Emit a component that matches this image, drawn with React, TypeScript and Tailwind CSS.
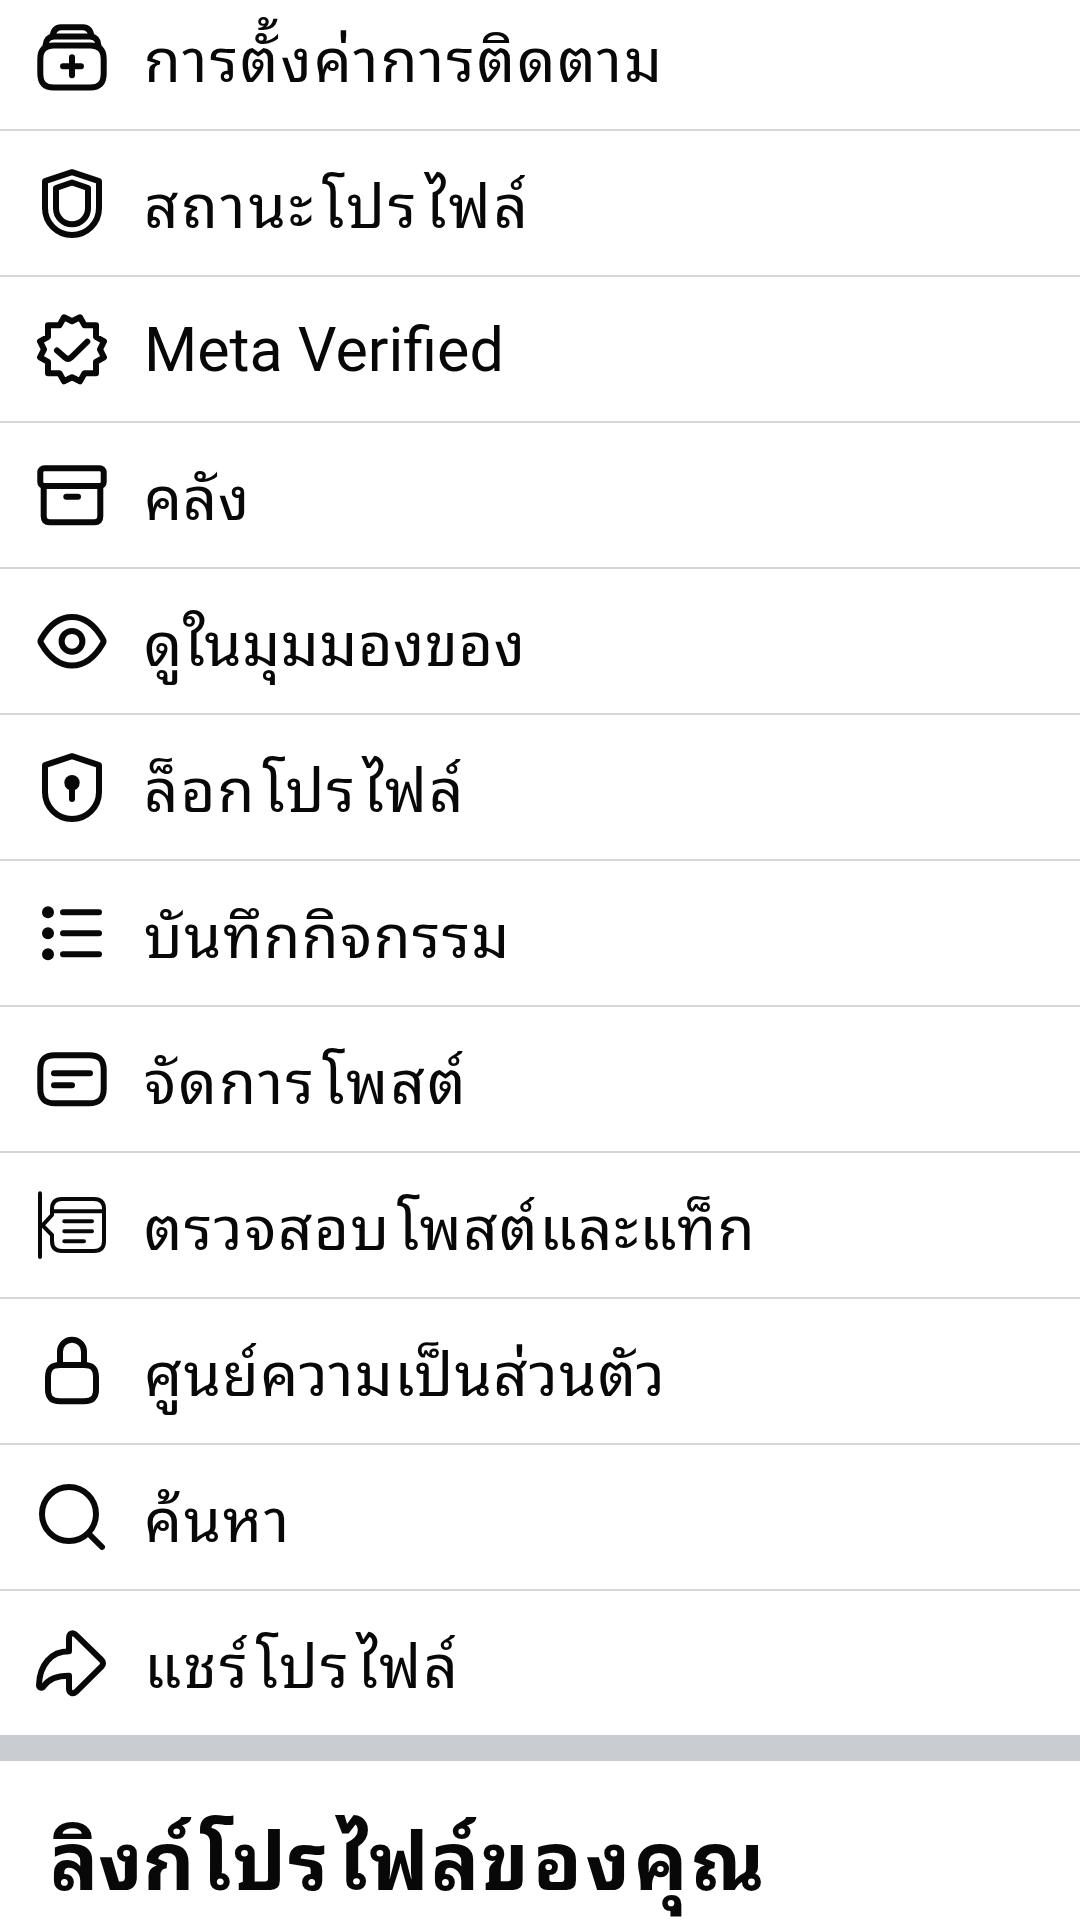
import type { ReactNode } from "react";

type Item = {
  label: string;
  text: string;
  icon: ReactNode;
};

const SHIELD = "M9 14.2L36 5.2L63 14.2V41A27 27 0 0 1 9 41Z";

const items: Item[] = [
  {
    label: "การตั้งค่าการติดตาม",
    text: "text-[60px] tracking-[2.1px] mt-[9px]",
    icon: (
      <>
        <path d="M16.5 15.4C17.3 9.8 20 6.3 25 6.3H47C52 6.3 54.7 9.8 55.5 15.4" />
        <path d="M9.5 24.5C9.8 19 13 15.4 18 15.4H54C59 15.4 62.2 19 62.5 24.5" />
        <path d="M18 24.6H54C63.5 24.6 67.7 29.5 67.7 38V52.5C67.7 62 63.5 66.5 54 66.5H18C8.5 66.5 4.3 62 4.3 52.5V38C4.3 29.5 8.5 24.6 18 24.6Z" />
        <path d="M36 36.3V54.3M27 45.3H45" />
      </>
    ),
  },
  {
    label: "สถานะโปรไฟล์",
    text: "text-[60px] tracking-[3px] mt-[9px]",
    icon: (
      <>
        <path d={SHIELD} />
        <path d="M20 21L36 15.5L52 21V41.3A16 16 0 0 1 20 41.3Z" />
      </>
    ),
  },
  {
    label: "Meta Verified",
    text: "text-[61px] mt-[2px]",
    icon: (
      <>
        <path d="M36 8.3L44 4.3L48.5 12.3H60V23.8L68 28.3L64 36.3L68 44.3L60 48.8V60.3H48.5L44 68.3L36 64.3L28 68.3L23.5 60.3H12V48.8L4 44.3L8 36.3L4 28.3L12 23.8V12.3H23.5L28 4.3Z" />
        <path d="M21 37.5L29 44.6Q32 47.3 35 44.6L51.3 28.6" />
      </>
    ),
  },
  {
    label: "คลัง",
    text: "text-[60px] tracking-[0.7px] mt-[9px]",
    icon: (
      <>
        <rect x="4.3" y="9.3" width="63.4" height="17.7" rx="4" />
        <path d="M7.7 27V57.3Q7.7 63.3 13.7 63.3H58.3Q64.3 63.3 64.3 57.3V27" />
        <path d="M30.3 37.7H42" />
      </>
    ),
  },
  {
    label: "ดูในมุมมองของ",
    text: "text-[60px] tracking-[0.4px] mt-[9px]",
    icon: (
      <>
        <path d="M5.2 34C13 20.5 24 12 36 12S59 20.5 66.8 34Q68.2 36.2 66.8 38.4C59 51.9 48 60.4 36 60.4S13 51.9 5.2 38.4Q3.8 36.2 5.2 34Z" />
        <circle cx="36" cy="36.3" r="10.4" />
      </>
    ),
  },
  {
    label: "ล็อกโปรไฟล์",
    text: "text-[60px] tracking-[2px] mt-[9px]",
    icon: (
      <>
        <path d={SHIELD} />
        <circle cx="36" cy="31.7" r="7.7" fill="currentColor" stroke="none" />
        <path d="M36 32V48" />
      </>
    ),
  },
  {
    label: "บันทึกกิจกรรม",
    text: "text-[60px] tracking-[1.35px] mt-[9px]",
    icon: (
      <>
        <g fill="currentColor" stroke="none">
          <circle cx="12" cy="15.2" r="6" />
          <circle cx="12" cy="36.2" r="6" />
          <circle cx="12" cy="57.2" r="6" />
        </g>
        <path d="M27 15.2H63M27 36.2H63M27 57.2H63" />
      </>
    ),
  },
  {
    label: "จัดการโพสต์",
    text: "text-[60px] tracking-[2.4px] mt-[9px]",
    icon: (
      <>
        <path d="M19 12.3H53C63.5 12.3 67.7 16.5 67.7 27V45.5C67.7 56 63.5 60.2 53 60.2H19C8.5 60.2 4.3 56 4.3 45.5V27C4.3 16.5 8.5 12.3 19 12.3Z" />
        <path d="M18 30.2H54M18 42.3H36" />
      </>
    ),
  },
  {
    label: "ตรวจสอบโพสต์และแท็ก",
    text: "text-[60px] tracking-[1.55px] mt-[9px]",
    icon: (
      <g strokeWidth="4">
        <path d="M4 4.3V68" />
        <path d="M16 26V20Q16 10 26 10H58Q68 10 68 20V52Q68 62 58 62H26Q16 62 16 52V46L6.5 36.3Z" />
        <path d="M16 22.3H68M28.3 32.2H56M28.3 42.2H56M28.3 52.2H48" />
      </g>
    ),
  },
  {
    label: "ศูนย์ความเป็นส่วนตัว",
    text: "text-[60px] tracking-[1.25px] mt-[9px]",
    icon: (
      <>
        <path d="M24 30V16.7A12 12 0 0 1 48 16.7V30" />
        <path d="M24 30H48C56.5 30 60 33.5 60 42V54.3C60 62.8 56.5 66.3 48 66.3H24C15.5 66.3 12 62.8 12 54.3V42C12 33.5 15.5 30 24 30Z" />
      </>
    ),
  },
  {
    label: "ค้นหา",
    text: "text-[60px] tracking-[1.65px] mt-[9px]",
    icon: (
      <>
        <circle cx="33" cy="33" r="27" />
        <path d="M53.5 53.5L66 66" />
      </>
    ),
  },
  {
    label: "แชร์โปรไฟล์",
    text: "text-[60px] tracking-[2.25px] mt-[9px]",
    icon: (
      <path d="M33 24.3V11C33 6.3 37 5 40 8L65.5 33C67.6 35 67.6 37.6 65.5 39.6L40 64.8C37 67.6 33 66.3 33 61.6V48.7C20 48.7 12 52.5 7.5 59.5C6 61.6 3 61 3 58C3.5 38 15 24.3 33 24.3Z" />
    ),
  },
];

// tall leading vowels get a bit of air on their left
const ThaiText = ({ text }: { text: string }) => (
  <>
    {text.split(/(?=[โไ])/).map((part, i) => (
      <span key={i} className={i > 0 ? "ml-[0.1em]" : ""}>
        {part}
      </span>
    ))}
  </>
);

const MenuRow = ({ item }: { item: Item }) => (
  <button className="flex h-[146px] w-full items-center gap-9 border-b-2 border-[#d4d6d9] pl-9 text-left">
    <svg
      viewBox="0 0 72 72"
      className="size-18 shrink-0"
      fill="none"
      stroke="currentColor"
      strokeWidth="6"
      strokeLinecap="round"
      strokeLinejoin="round"
    >
      {item.icon}
    </svg>
    <span className={`leading-[60px] whitespace-nowrap ${item.text}`}>
      <ThaiText text={item.label} />
    </span>
  </button>
);

export default function App() {
  return (
    <div className="h-[1920px] w-[1080px] overflow-hidden bg-white font-[Roboto,'Noto_Looped_Thai','Noto_Sans_Thai_Looped',Loma,Waree,Garuda,'Noto_Sans_Thai','Noto_Sans',sans-serif] text-[#080809]">
      <div className="-mt-[15px]">
        {items.map((item) => (
          <MenuRow key={item.label} item={item} />
        ))}
      </div>
      <div className="-mt-0.5 h-[26px] bg-[#c9ccd1]" />
      <h2 className="mt-[52px] pl-[50px] text-[80px] leading-[100px] font-bold whitespace-nowrap">
        <span>ลิงก์</span>
        <span className="ml-1.5 tracking-[2.2px]">โปร</span>
        <span className="ml-2 tracking-[2.2px]">ไฟล์</span>
        <span className="tracking-[3.7px]">ของคุณ</span>
      </h2>
    </div>
  );
}
